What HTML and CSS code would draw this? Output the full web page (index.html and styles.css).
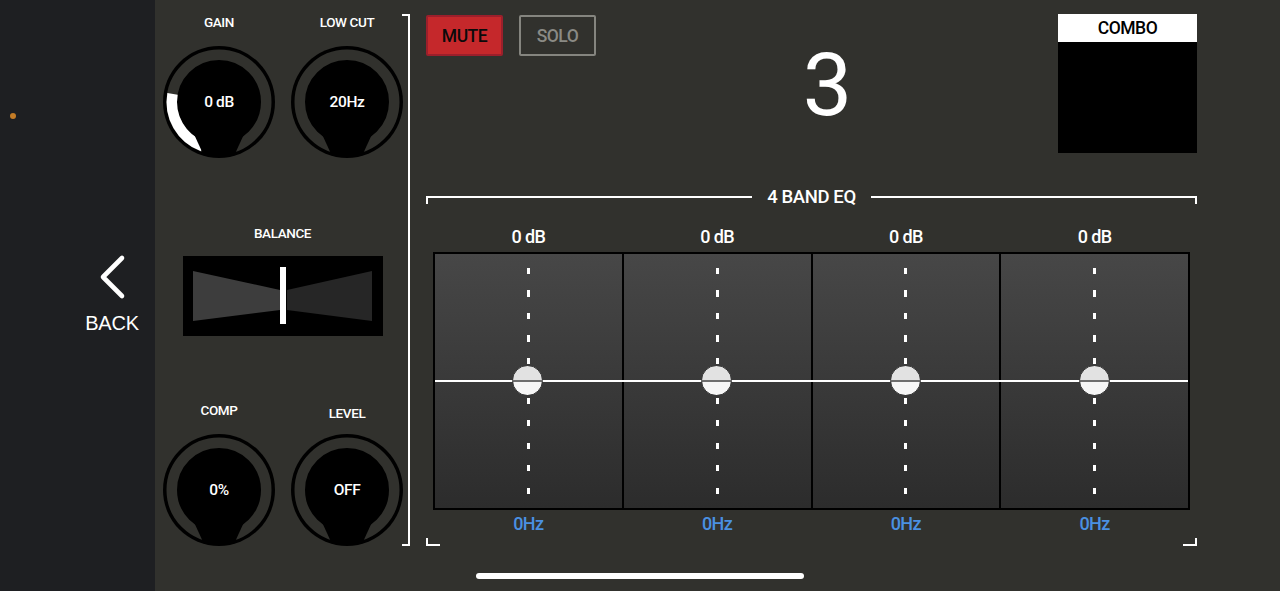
FILE: index.html
```html
<!DOCTYPE html>
<html lang="en">
<head>
<meta charset="utf-8">
<title>Channel 3</title>
<link rel="stylesheet" href="styles.css">
</head>
<body>
<div class="app">
  <aside class="sidebar">
    <span class="status-dot"></span>
    <div class="back">
      <svg class="chevron" width="29" height="46" viewBox="0 0 29 46"><path d="M24 4 L5 23 L24 42" fill="none" stroke="#fff" stroke-width="4.6" stroke-linecap="round" stroke-linejoin="round"/></svg>
      <span class="back-label">BACK</span>
    </div>
  </aside>

  <section class="channel-panel">
    <div class="knob-row">
      <div class="knob-cell">
        <div class="knob-label">GAIN</div>
        <div class="knob">
          <svg width="112" height="112" viewBox="0 0 112 112">
            <circle cx="56" cy="56" r="56" fill="#000"/>
            <circle cx="56" cy="56" r="47.25" fill="none" stroke="#31312d" stroke-width="10.5"/>
            <path d="M39.8 100.4 A47.25 47.25 0 0 1 9.5 47.8" fill="none" stroke="#fff" stroke-width="10.5"/>
            <polygon points="30,86 82,86 71,110 41,110" fill="#000"/>
          </svg>
          <span class="knob-value">0 dB</span>
        </div>
      </div>
      <div class="knob-cell">
        <div class="knob-label">LOW CUT</div>
        <div class="knob">
          <svg width="112" height="112" viewBox="0 0 112 112">
            <circle cx="56" cy="56" r="56" fill="#000"/>
            <circle cx="56" cy="56" r="47.25" fill="none" stroke="#31312d" stroke-width="10.5"/>
            <polygon points="30,86 82,86 71,110 41,110" fill="#000"/>
          </svg>
          <span class="knob-value">20Hz</span>
        </div>
      </div>
    </div>

    <div class="balance">
      <div class="knob-label">BALANCE</div>
      <svg class="balance-box" width="200" height="80" viewBox="0 0 200 80">
        <rect width="200" height="80" fill="#000"/>
        <polygon points="10,15 97,34 97,54 10,65" fill="#3d3d3d"/>
        <polygon points="104,34 189,15 189,65 104,54" fill="#262626"/>
        <rect x="97" y="11" width="6" height="57" fill="#fff"/>
      </svg>
    </div>

    <div class="knob-row bottom">
      <div class="knob-cell">
        <div class="knob-label">COMP</div>
        <div class="knob">
          <svg width="112" height="112" viewBox="0 0 112 112">
            <circle cx="56" cy="56" r="56" fill="#000"/>
            <circle cx="56" cy="56" r="47.25" fill="none" stroke="#31312d" stroke-width="10.5"/>
            <polygon points="30,86 82,86 71,110 41,110" fill="#000"/>
          </svg>
          <span class="knob-value">0%</span>
        </div>
      </div>
      <div class="knob-cell">
        <div class="knob-label shifted">LEVEL</div>
        <div class="knob raised">
          <svg width="112" height="112" viewBox="0 0 112 112">
            <circle cx="56" cy="56" r="56" fill="#000"/>
            <circle cx="56" cy="56" r="47.25" fill="none" stroke="#31312d" stroke-width="10.5"/>
            <polygon points="30,86 82,86 71,110 41,110" fill="#000"/>
          </svg>
          <span class="knob-value">OFF</span>
        </div>
      </div>
    </div>
  </section>

  <main class="main">
    <div class="top-row">
      <div class="buttons">
        <button class="btn mute">MUTE</button>
        <button class="btn solo">SOLO</button>
      </div>
      <div class="channel-num">3</div>
      <div class="combo">
        <div class="combo-title">COMBO</div>
        <div class="combo-body"></div>
      </div>
    </div>

    <section class="eq">
      <div class="eq-header">
        <span class="eq-line left"></span>
        <span class="eq-title">4 BAND EQ</span>
        <span class="eq-line right"></span>
      </div>
      <div class="eq-grid eq-gains">
        <span>0 dB</span><span>0 dB</span><span>0 dB</span><span>0 dB</span>
      </div>
      <div class="eq-grid eq-box">
        <div class="eq-band"><span class="dashes"></span><span class="handle"></span><span class="dashes"></span></div>
        <div class="eq-band"><span class="dashes"></span><span class="handle"></span><span class="dashes"></span></div>
        <div class="eq-band"><span class="dashes"></span><span class="handle"></span><span class="dashes"></span></div>
        <div class="eq-band"><span class="dashes"></span><span class="handle"></span><span class="dashes"></span></div>
        <span class="eq-zero"></span>
      </div>
      <div class="eq-grid eq-freqs">
        <span>0Hz</span><span>0Hz</span><span>0Hz</span><span>0Hz</span>
      </div>
      <div class="eq-footer">
        <span class="corner left"></span>
        <span class="corner right"></span>
      </div>
    </section>
  </main>

  <div class="home-indicator"></div>
</div>
</body>
</html>
```

FILE: styles.css
```css
* { box-sizing: border-box; }

html, body {
  margin: 0;
  padding: 0;
  width: 1280px;
  height: 591px;
  overflow: hidden;
  background: #31312d;
}

.app {
  position: relative;
  display: flex;
  width: 1280px;
  height: 591px;
  font-family: "Roboto", "DejaVu Sans Condensed", sans-serif;
  font-weight: 500;
  color: #fff;
}

/* Sidebar */
.sidebar {
  flex: 0 0 155px;
  min-width: 0;
  display: flex;
  flex-direction: column;
  align-items: flex-start;
  background: #1e1f22;
}

.status-dot {
  display: block;
  width: 6px;
  height: 6px;
  margin: 113px 0 0 10px;
  border-radius: 50%;
  background: #c47c26;
}

.back {
  display: flex;
  flex-direction: column;
  align-items: center;
  width: 54px;
  margin: 135px 0 0 85px;
}

.chevron { display: block; }

.back-label {
  margin-top: 12px;
  font-family: "Liberation Sans", Arial, sans-serif;
  font-weight: 400;
  font-size: 20px;
  line-height: 23px;
  letter-spacing: -0.2px;
}

/* Channel panel */
.channel-panel {
  position: relative;
  flex: 0 0 255px;
  min-width: 0;
  height: 532px;
  margin-top: 14px;
  border-right: 2px solid #fff;
  display: flex;
  flex-direction: column;
}

.channel-panel::before,
.channel-panel::after {
  content: "";
  position: absolute;
  right: -2px;
  width: 8px;
  height: 2px;
  background: #fff;
}
.channel-panel::before { top: 0; }
.channel-panel::after { bottom: 0; }

.knob-row {
  display: grid;
  grid-template-columns: 128px 125px;
}

.knob-cell {
  display: flex;
  flex-direction: column;
  align-items: center;
}

.knob-cell + .knob-cell { margin-right: -3px; }

.knob-label {
  font-size: 13.5px;
  line-height: 16px;
  letter-spacing: -0.4px;
  text-align: center;
}

.knob-label.shifted { margin-top: 3px; }

.knob {
  display: grid;
  place-items: center;
  width: 112px;
  height: 112px;
  margin-top: 16px;
}

.knob.raised { margin-top: 13px; }

.knob > svg,
.knob > .knob-value {
  grid-area: 1 / 1;
}

.knob > svg { display: block; }

.knob-value {
  font-size: 15.5px;
  line-height: 18px;
  letter-spacing: -0.4px;
}

.balance {
  display: flex;
  flex-direction: column;
  align-items: center;
  margin-top: 67px;
  padding-left: 2px;
}

.balance-box {
  display: block;
  margin-top: 15px;
}

.knob-row.bottom { margin-top: 66px; }

/* Main area */
.main {
  flex: 1;
  min-width: 0;
  padding: 14px 83px 0 16px;
  display: flex;
  flex-direction: column;
}

.top-row {
  display: flex;
  align-items: flex-start;
  height: 139px;
}

.buttons {
  display: flex;
  gap: 16px;
  margin-top: 1px;
}

.btn {
  width: 77px;
  height: 41px;
  padding: 0;
  border-radius: 2px;
  font-family: inherit;
  font-weight: 500;
  font-size: 17.5px;
  line-height: 20px;
  letter-spacing: -0.5px;
  cursor: pointer;
}

.btn.mute {
  background: #c5282b;
  border: 2px solid #9c1f2b;
  color: #0a0a0a;
}

.btn.solo {
  background: transparent;
  border: 2px solid #85857f;
  color: #8a8a85;
}

.channel-num {
  flex: 1;
  margin-top: 21px;
  text-align: center;
  font-size: 88px;
  font-weight: 400;
  line-height: 100px;
  letter-spacing: -1px;
}

.combo {
  width: 139px;
  height: 139px;
  display: flex;
  flex-direction: column;
}

.combo-title {
  height: 28px;
  background: #fff;
  color: #000;
  font-size: 17.5px;
  line-height: 28px;
  letter-spacing: -0.5px;
  text-align: center;
}

.combo-body {
  flex: 1;
  background: #000;
}

/* EQ */
.eq {
  margin-top: 33px;
  display: flex;
  flex-direction: column;
}

.eq-header {
  display: flex;
  height: 22px;
}

.eq-line {
  flex: 1;
  height: 8px;
  margin-top: 10px;
  border-top: 2px solid #fff;
}
.eq-line.left { border-left: 2px solid #fff; }
.eq-line.right { border-right: 2px solid #fff; }

.eq-title {
  margin: 0 15px;
  font-size: 18.5px;
  line-height: 22px;
  letter-spacing: -0.4px;
}

.eq-grid {
  display: grid;
  grid-template-columns: repeat(4, 1fr);
  gap: 2px;
  margin: 0 7px;
  padding: 0 2px;
}

.eq-gains {
  margin-top: 18px;
  font-size: 18px;
  line-height: 22px;
  letter-spacing: -0.6px;
  text-align: center;
}

.eq-box {
  position: relative;
  height: 258px;
  margin-top: 4px;
  padding: 2px;
  background: #000;
}

.eq-band {
  position: relative;
  display: flex;
  flex-direction: column;
  align-items: center;
  justify-content: space-between;
  padding: 14px 0;
  background: linear-gradient(#474747, #2c2c2c);
}

.dashes {
  display: block;
  width: 3px;
  height: 96px;
  background: repeating-linear-gradient(to bottom, #fff 0 6px, transparent 6px 22.5px);
}

.handle {
  position: absolute;
  z-index: 2;
  top: 111px;
  left: calc(50% - 16px);
  width: 31px;
  height: 31px;
  border-radius: 50%;
  border: 1px solid #3a3a3a;
  background: linear-gradient(#e2e2e2 0 47%, #6e6e6e 47% 54%, #f6f6f6 54%);
}

.eq-zero {
  position: absolute;
  z-index: 1;
  left: 2px;
  right: 2px;
  top: 128px;
  height: 2px;
  background: #fff;
}

.eq-freqs {
  margin-top: 3px;
  font-size: 18px;
  line-height: 22px;
  letter-spacing: -0.6px;
  text-align: center;
  color: #4a90e2;
}

.eq-footer {
  display: flex;
  justify-content: space-between;
  margin-top: 3px;
}

.corner {
  width: 14px;
  height: 8px;
  border-bottom: 2px solid #fff;
}
.corner.left { border-left: 2px solid #fff; }
.corner.right { border-right: 2px solid #fff; }

.home-indicator {
  position: absolute;
  left: 476px;
  bottom: 12px;
  width: 328px;
  height: 6px;
  border-radius: 3px;
  background: #fff;
}
```
